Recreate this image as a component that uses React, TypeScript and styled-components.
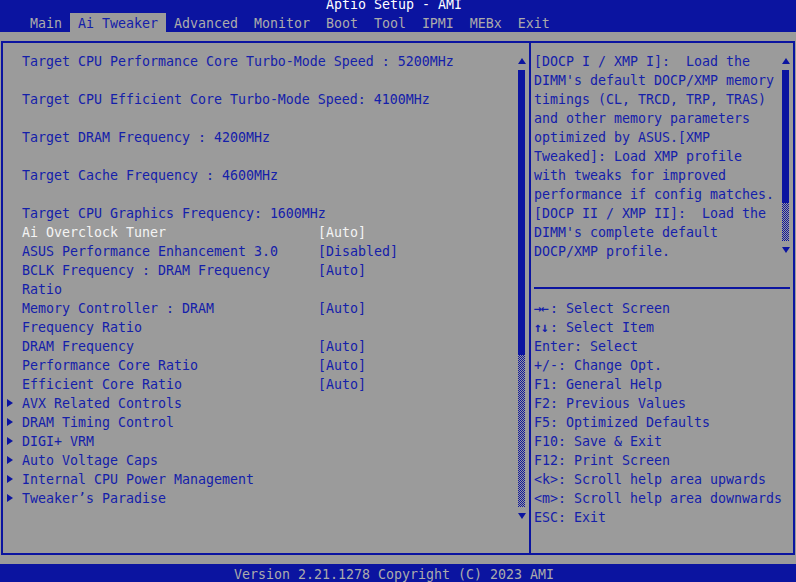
import React from "react";
import styled, { createGlobalStyle } from "styled-components";

const BLUE = "#0b14a0";
const GRAY = "#9b9b9b";
const TEXT_BLUE = "#1420aa";
const LIGHT = "#ababab";

const GlobalStyle = createGlobalStyle`
  html, body {
    margin: 0;
    padding: 0;
    background: ${GRAY};
    overflow: hidden;
  }
  body {
    font-family: "DejaVu Sans Mono", "Liberation Mono", monospace;
    font-size: 13.29px;
    line-height: 19px;
  }
`;

const Screen = styled.div`
  width: 800px;
  height: 589px;
  margin: -6px 0 0 -2px;
  display: grid;
  grid-template-rows: 38px 532px 19px;
  white-space: pre;
`;

const Header = styled.header`
  background: ${BLUE};
  display: grid;
  grid-template-rows: 19px 19px;
`;

const Title = styled.div`
  color: #ffffff;
  text-align: center;
  padding: 1px 8px 0 0;
`;

const Tabs = styled.nav`
  display: flex;
  padding-left: 24px;
`;

const Tab = styled.div<{ $active?: boolean }>`
  box-sizing: border-box;
  height: 19px;
  padding: 1px 8px 0;
  color: ${(p) => (p.$active ? TEXT_BLUE : LIGHT)};
  background: ${(p) => (p.$active ? GRAY : "transparent")};
`;

const MainArea = styled.main`
  background: ${GRAY};
  padding: 9px 0 0 3px;
`;

const Frame = styled.div`
  box-sizing: border-box;
  width: 794px;
  height: 514px;
  border: 2px solid ${BLUE};
  display: grid;
  grid-template-columns: 526px 2px 262px;
`;

const Divider = styled.div`
  background: ${BLUE};
`;

const LeftPanel = styled.section`
  display: grid;
  grid-template-columns: 1fr 8px;
  padding: 8px 3px 0 3px;
  align-items: start;
`;

const List = styled.div`
  display: flex;
  flex-direction: column;
  padding-top: 1px;
`;

const Row = styled.div<{ $selected?: boolean }>`
  display: grid;
  grid-template-columns: 16px 296px auto;
  color: ${(p) => (p.$selected ? "#f4f4f4" : TEXT_BLUE)};
`;

const InfoRow = styled.div<{ $last?: boolean }>`
  color: ${TEXT_BLUE};
  padding-left: 16px;
  height: ${(p) => (p.$last ? 19 : 38)}px;
`;

const Marker = styled.span`
  display: flex;
  align-items: flex-start;
  margin-top: -1px;
`;

const Label = styled.span``;
const Value = styled.span``;

const ScrollBar = styled.div`
  display: flex;
  flex-direction: column;
  width: 8px;
`;

const ArrowCell = styled.div`
  height: 19px;
  display: flex;
`;

const Thumb = styled.div<{ $rows: number }>`
  width: 7px;
  height: ${(p) => p.$rows * 19}px;
  background: ${BLUE};
`;

const Track = styled.div<{ $rows: number }>`
  width: 7px;
  height: ${(p) => p.$rows * 19}px;
  background: repeating-conic-gradient(${BLUE} 0 25%, transparent 0 50%) 0 0 / 2px 2px;
`;

const RightPanel = styled.section`
  display: flex;
  flex-direction: column;
  padding-top: 8px;
`;

const HelpTop = styled.div`
  display: grid;
  grid-template-columns: 1fr 8px;
  padding: 0 3px;
  height: 209px;
`;

const HelpText = styled.div`
  color: ${TEXT_BLUE};
  padding-top: 1px;
`;

const Separator = styled.div`
  height: 2px;
  background: ${BLUE};
  margin: 27px 3px 9px 3px;
`;

const Keys = styled.div`
  color: ${TEXT_BLUE};
  padding: 1px 0 0 3px;
  display: flex;
  flex-direction: column;
`;

const KeyGlyph = styled.b`
  display: inline-block;
  width: 16px;
  font-weight: bold;
  letter-spacing: -1px;
  vertical-align: top;
`;

const Footer = styled.footer`
  background: ${BLUE};
  color: ${LIGHT};
  text-align: center;
  padding: 1px 8px 0 0;
`;

const Up = () => (
  <svg width="8" height="19" viewBox="0 0 8 19">
    <polygon points="0,13 4,7 8,13" fill={BLUE} />
  </svg>
);
const Down = () => (
  <svg width="8" height="19" viewBox="0 0 8 19">
    <polygon points="0,6 8,6 4,12" fill={BLUE} />
  </svg>
);
const Right = () => (
  <svg width="8" height="19" viewBox="0 0 8 19">
    <polygon points="1,6 7,10 1,14" fill={BLUE} />
  </svg>
);

const tabs = ["Main", "Ai Tweaker", "Advanced", "Monitor", "Boot", "Tool", "IPMI", "MEBx", "Exit"];

const info = [
  "Target CPU Performance Core Turbo-Mode Speed : 5200MHz",
  "Target CPU Efficient Core Turbo-Mode Speed: 4100MHz",
  "Target DRAM Frequency : 4200MHz",
  "Target Cache Frequency : 4600MHz",
  "Target CPU Graphics Frequency: 1600MHz",
];

const settings: { label: string[]; value: string; sel?: boolean }[] = [
  { label: ["Ai Overclock Tuner"], value: "[Auto]", sel: true },
  { label: ["ASUS Performance Enhancement 3.0"], value: "[Disabled]" },
  { label: ["BCLK Frequency : DRAM Frequency", "Ratio"], value: "[Auto]" },
  { label: ["Memory Controller : DRAM", "Frequency Ratio"], value: "[Auto]" },
  { label: ["DRAM Frequency"], value: "[Auto]" },
  { label: ["Performance Core Ratio"], value: "[Auto]" },
  { label: ["Efficient Core Ratio"], value: "[Auto]" },
];

const menus = [
  "AVX Related Controls",
  "DRAM Timing Control",
  "DIGI+ VRM",
  "Auto Voltage Caps",
  "Internal CPU Power Management",
  "Tweaker’s Paradise",
];

const help = [
  "[DOCP I / XMP I]:  Load the",
  "DIMM's default DOCP/XMP memory",
  "timings (CL, TRCD, TRP, TRAS)",
  "and other memory parameters",
  "optimized by ASUS.[XMP",
  "Tweaked]: Load XMP profile",
  "with tweaks for improved",
  "performance if config matches.",
  "[DOCP II / XMP II]:  Load the",
  "DIMM's complete default",
  "DOCP/XMP profile.",
];

const keys: { glyph?: string; text: string }[] = [
  { glyph: "→←", text: ": Select Screen" },
  { glyph: "↑↓", text: ": Select Item" },
  { text: "Enter: Select" },
  { text: "+/-: Change Opt." },
  { text: "F1: General Help" },
  { text: "F2: Previous Values" },
  { text: "F5: Optimized Defaults" },
  { text: "F10: Save & Exit" },
  { text: "F12: Print Screen" },
  { text: "<k>: Scroll help area upwards" },
  { text: "<m>: Scroll help area downwards" },
  { text: "ESC: Exit" },
];

export default function App() {
  return (
    <>
      <GlobalStyle />
      <Screen>
        <Header>
          <Title>Aptio Setup - AMI</Title>
          <Tabs>
            {tabs.map((t) => (
              <Tab key={t} $active={t === "Ai Tweaker"}>
                {t}
              </Tab>
            ))}
          </Tabs>
        </Header>
        <MainArea>
          <Frame>
            <LeftPanel>
              <List>
                {info.map((t, i) => (
                  <InfoRow key={t} $last={i === info.length - 1}>
                    {t}
                  </InfoRow>
                ))}
                {settings.map((s) => (
                  <Row key={s.label[0]} $selected={s.sel}>
                    <Marker />
                    <Label>{s.label.join("\n")}</Label>
                    <Value>{s.value}</Value>
                  </Row>
                ))}
                {menus.map((m) => (
                  <Row key={m}>
                    <Marker>
                      <Right />
                    </Marker>
                    <Label>{m}</Label>
                    <Value />
                  </Row>
                ))}
              </List>
              <ScrollBar>
                <ArrowCell>
                  <Up />
                </ArrowCell>
                <Thumb $rows={15} />
                <Track $rows={8} />
                <ArrowCell>
                  <Down />
                </ArrowCell>
              </ScrollBar>
            </LeftPanel>
            <Divider />
            <RightPanel>
              <HelpTop>
                <HelpText>{help.join("\n")}</HelpText>
                <ScrollBar>
                  <ArrowCell>
                    <Up />
                  </ArrowCell>
                  <Thumb $rows={7} />
                  <Track $rows={2} />
                  <ArrowCell>
                    <Down />
                  </ArrowCell>
                </ScrollBar>
              </HelpTop>
              <Separator />
              <Keys>
                {keys.map((k) => (
                  <span key={k.text}>
                    {k.glyph && <KeyGlyph>{k.glyph}</KeyGlyph>}
                    {k.text}
                  </span>
                ))}
              </Keys>
            </RightPanel>
          </Frame>
        </MainArea>
        <Footer>Version 2.21.1278 Copyright (C) 2023 AMI</Footer>
      </Screen>
    </>
  );
}
